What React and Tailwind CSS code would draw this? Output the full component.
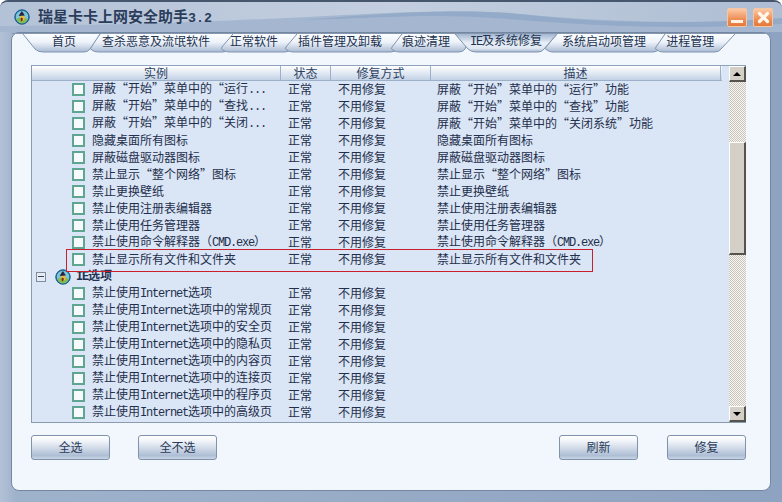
import React from "react";

function T({ text }) {
  const parts = text.split(/([ -~]+)/).filter(Boolean);
  return (
    <>
      {parts.map((p, i) =>
        /^[ -~]+$/.test(p) ? (
          <span key={i} className="font-['Liberation_Mono',monospace] text-[12px] tracking-[-1.2px]">{p}</span>
        ) : (
          <span key={i}>{p}</span>
        )
      )}
    </>
  );
}

function Logo() {
  return (
    <svg width="16" height="16" viewBox="0 0 17 17" className="shrink-0">
      <circle cx="8.5" cy="8.5" r="8" fill="#2a76a8" />
      <circle cx="8.5" cy="8.5" r="6.6" fill="#7cc6dc" />
      <path d="M2.5 11 Q8.5 6 14.5 11 Q12 16 8.5 15.5 Q5 16 2.5 11Z" fill="#86bb50" />
      <circle cx="8.8" cy="9.6" r="2.6" fill="#f0b838" />
      <path d="M5 7.4 L11.5 7 L8.5 2 L6.8 4.2 Z" fill="#2a2440" />
      <path d="M6.8 10 L8 9 L9.6 10.4 L8.6 13 L7.4 13 Z" fill="#7a2f1c" />
      <circle cx="8.5" cy="8.5" r="7.6" fill="none" stroke="#1f5c8c" strokeWidth="1" />
    </svg>
  );
}

const TABS = ["首页", "查杀恶意及流氓软件", "正常软件", "插件管理及卸载", "痕迹清理", "IE及系统修复", "系统启动项管理", "进程管理"];

// top-left, bottom-left, bottom-right, top-right in panel coordinates
const SHAPES = [
  [100, 90, 226, 233],
  [233, 221, 288, 297],
  [297, 285, 394, 402],
  [402, 391, 462, 470],
  [557, 545, 656, 665],
  [665, 655, 718, 735],
  [23, 40, 87, 100],
  [455, 473, 541, 557],
];

function TabStrip() {
  return (
    <svg width="760" height="21" viewBox="12 32 760 21" className="absolute left-0 top-0">
      <defs>
        <linearGradient id="tabA" x1="0" y1="0" x2="0" y2="1">
          <stop offset="0" stopColor="#fbfdff" />
          <stop offset="0.45" stopColor="#eef3fa" />
          <stop offset="1" stopColor="#a9bad2" />
        </linearGradient>
        <linearGradient id="tabB" x1="0" y1="0" x2="0" y2="1">
          <stop offset="0" stopColor="#a3b6d0" />
          <stop offset="0.5" stopColor="#eaf0f8" />
          <stop offset="0.8" stopColor="#dfe7f2" />
          <stop offset="1" stopColor="#a3b4cc" />
        </linearGradient>
      </defs>
      <path d="M12 32.5 H771" stroke="#8497b2" strokeWidth="1" />
      {SHAPES.map(([tl, bl, br, tr], i) => {
        const leftIn = bl > tl;
        const d = leftIn
          ? `M${tl} 33 L${bl - 5} 48 Q${bl - 2} 51 ${bl + 3} 51 L${br - 3} 51 Q${br + 1} 51 ${br + 3} 48 L${tr} 33 Z`
          : `M${tl} 33 L${bl + 1} 46 Q${bl - 1} 48 ${bl + 2} 49 Q${bl + 4} 51 ${bl + 8} 51 L${br - 3} 51 Q${br + 1} 51 ${br + 3} 48 L${tr} 33 Z`;
        return (
          <g key={i}>
            <path d={d} fill={i === 7 ? "url(#tabB)" : "url(#tabA)"} />
            <path d={d.replace(" Z", "")} fill="none" stroke="#8094b0" strokeWidth="1" />
          </g>
        );
      })}
    </svg>
  );
}

const ROWS1 = [
  ["屏蔽“开始”菜单中的“运行...", "屏蔽“开始”菜单中的“运行”功能"],
  ["屏蔽“开始”菜单中的“查找...", "屏蔽“开始”菜单中的“查找”功能"],
  ["屏蔽“开始”菜单中的“关闭...", "屏蔽“开始”菜单中的“关闭系统”功能"],
  ["隐藏桌面所有图标", "隐藏桌面所有图标"],
  ["屏蔽磁盘驱动器图标", "屏蔽磁盘驱动器图标"],
  ["禁止显示“整个网络”图标", "禁止显示“整个网络”图标"],
  ["禁止更换壁纸", "禁止更换壁纸"],
  ["禁止使用注册表编辑器", "禁止使用注册表编辑器"],
  ["禁止使用任务管理器", "禁止使用任务管理器"],
  ["禁止使用命令解释器（CMD.exe）", "禁止使用命令解释器（CMD.exe）"],
  ["禁止显示所有文件和文件夹", "禁止显示所有文件和文件夹"],
];
const ROWS2 = [
  "禁止使用Internet选项",
  "禁止使用Internet选项中的常规页",
  "禁止使用Internet选项中的安全页",
  "禁止使用Internet选项中的隐私页",
  "禁止使用Internet选项中的内容页",
  "禁止使用Internet选项中的连接页",
  "禁止使用Internet选项中的程序页",
  "禁止使用Internet选项中的高级页",
];

function Cell({ children }) {
  return <span className="mb-[1px] block leading-[14px]">{children}</span>;
}

function Row({ name, desc }) {
  return (
    <div className="grid h-[17px] grid-cols-[249px_50px_100px_290px] whitespace-nowrap">
      <div className="flex h-[17px] items-center pl-[40px]">
        <span className="h-[13px] w-[13px] shrink-0 border-2 border-[#5fa592] bg-[#f6fafa]" />
        <span className="ml-[7px]"><Cell><T text={name} /></Cell></span>
      </div>
      <div className="flex h-[17px] items-center pl-[7px]"><Cell>正常</Cell></div>
      <div className="flex h-[17px] items-center pl-[7px]"><Cell>不用修复</Cell></div>
      <div className="flex h-[17px] items-center pl-[6px]">{desc ? <Cell><T text={desc} /></Cell> : null}</div>
    </div>
  );
}

function Btn({ label }) {
  return (
    <button className="h-[25px] w-[79px] rounded-[3px] border border-[#8093ad] bg-[linear-gradient(#ffffff_0%,#eef2f8_25%,#aebed5_85%,#c9d5e5_100%)] pb-[2px] text-[12px] leading-[14px] text-[#2a3c5a]">
      {label}
    </button>
  );
}

export default function App() {
  return (
    <div
      lang="zh-CN"
      className="relative flex h-[502px] w-[782px] flex-col overflow-hidden rounded-t-[8px] border-t-2 border-[#46566c] bg-[linear-gradient(90deg,#b3c1d6_0%,#9fb2cc_2%,#8ea3c1_100%)] text-[12px] text-[#1f2f4c] font-['Noto_Sans_CJK_SC','Noto_Sans',sans-serif]"
    >
      <svg width="782" height="30" viewBox="0 2 782 30" className="absolute left-0 top-0">
        <defs>
          <linearGradient id="ttl" x1="0" y1="0" x2="1" y2="0">
            <stop offset="0" stopColor="#b4c2d7" />
            <stop offset="0.5" stopColor="#c3cfe0" />
            <stop offset="1" stopColor="#aebdd3" />
          </linearGradient>
        </defs>
        <rect x="0" y="2" width="782" height="30" fill="#a5b7d0" />
        <path d="M0 2 H782 V19 C700 24 600 22 520 14 C420 4 300 24 0 26 Z" fill="url(#ttl)" />
        <path d="M300 20 C400 12 470 8 530 15 C610 24 700 24 782 18 V24 C680 30 600 26 520 20 C440 12 380 18 300 20 Z" fill="#8fa6c6" opacity="0.8" />
      </svg>

      <div className="relative flex h-[30px] shrink-0 items-center pl-[14px] pr-[9px]">
        <Logo />
        <div className="ml-[8px] text-[15px] font-bold leading-none text-[#2b3d5b]">
          瑞星卡卡上网安全助手<span className="font-['Liberation_Mono',monospace] text-[13.3px]">3.2</span>
        </div>
        <div className="ml-auto flex gap-[6px]">
          <div className="flex h-[19px] w-[20px] items-end justify-center rounded-[2px] border border-[#f3c7a6] bg-[linear-gradient(#fbc9a6,#ee8f55_60%,#e5783a)] pb-[3px]">
            <div className="h-[3px] w-[12px] bg-[#fff3e6]" />
          </div>
          <div className="flex h-[19px] w-[20px] items-center justify-center rounded-[2px] border border-[#f3c7a6] bg-[linear-gradient(#fbc9a6,#ee8f55_60%,#e5783a)]">
            <svg width="13" height="13" viewBox="0 0 13 13">
              <path d="M2.5 2.5 L10.5 10.5 M10.5 2.5 L2.5 10.5" stroke="#fff6ec" strokeWidth="3.2" strokeLinecap="round" />
            </svg>
          </div>
        </div>
      </div>

      <div className="mx-[11px] mb-[11px] flex min-h-0 flex-1 flex-col rounded-[8px] border border-[#75879f] bg-[#f2f7fe]">
        <div className="relative h-[20px] shrink-0 rounded-t-[8px]">
          <TabStrip />
          <div className="relative flex h-[16px] items-center gap-[20px] whitespace-nowrap pl-[40px] leading-[14px] text-[#22324f]">
            {TABS.map((t, i) => (
              <span key={t} className={i === 0 ? "mr-[6px]" : ""}><T text={t} /></span>
            ))}
          </div>
        </div>

        <div className="relative ml-[19px] mt-[12px] h-[358px] w-[715px] shrink-0 border-b border-l border-[#8a9bb0] border-t border-t-[#8fa3bd] bg-[#dae5f5]">
          <div className="grid h-[15px] w-[690px] grid-cols-[249px_50px_100px_290px] border-b border-[#9db0c9] bg-[linear-gradient(#ffffff,#c3d2e6)] text-center leading-[14px] text-[#2d4262]">
            <div className="border-r border-[#9db0c9]">实例</div>
            <div className="border-r border-[#9db0c9]">状态</div>
            <div className="border-r border-[#9db0c9]">修复方式</div>
            <div className="border-r border-[#9db0c9]">描述</div>
          </div>

          <div>
            {ROWS1.map(([a, b]) => <Row key={a} name={a} desc={b} />)}
            <div className="flex h-[17px] items-center whitespace-nowrap pl-[4px]">
              <span className="flex h-[10px] w-[10px] items-center justify-center border border-[#7f8c9c] bg-[#e6ecf6]">
                <span className="h-[1px] w-[6px] bg-[#39465a]" />
              </span>
              <span className="ml-[9px]"><Logo /></span>
              <span className="ml-[5px] font-bold text-[#1f3152]"><Cell><T text="IE选项" /></Cell></span>
            </div>
            {ROWS2.map((a) => <Row key={a} name={a} />)}
          </div>

          {/* scrollbar */}
          <div className="absolute right-0 top-0 flex h-[356px] w-[17px] flex-col bg-[repeating-conic-gradient(#c8c4ba_0_25%,#f7f6f2_0_50%)] bg-[length:2px_2px]">
            <div className="flex h-[16px] shrink-0 items-center justify-center border-b-2 border-r-2 border-l border-t border-b-[#55534d] border-r-[#55534d] border-l-white border-t-white bg-[#d4d0c8]">
              <div className="h-0 w-0 border-x-[4px] border-b-[4px] border-x-transparent border-b-black" />
            </div>
            <div className="mt-[60px] h-[113px] shrink-0 border-b-2 border-r-2 border-l border-t border-b-[#55534d] border-r-[#55534d] border-l-white border-t-white bg-[#d4d0c8]" />
            <div className="flex-1" />
            <div className="flex h-[16px] shrink-0 items-center justify-center border-b-2 border-r-2 border-l border-t border-b-[#55534d] border-r-[#55534d] border-l-white border-t-white bg-[#d4d0c8]">
              <div className="h-0 w-0 border-x-[4px] border-t-[4px] border-x-transparent border-t-black" />
            </div>
          </div>

          {/* red highlight */}
          <div className="absolute left-[34px] top-[183px] h-[23px] w-[527px] border border-[#c9202c]" />
        </div>

        <div className="ml-[19px] mt-[12px] flex w-[715px] items-start">
          <Btn label="全选" />
          <div className="ml-[28px]"><Btn label="全不选" /></div>
          <div className="ml-auto"><Btn label="刷新" /></div>
          <div className="ml-[29px]"><Btn label="修复" /></div>
        </div>
      </div>
    </div>
  );
}
